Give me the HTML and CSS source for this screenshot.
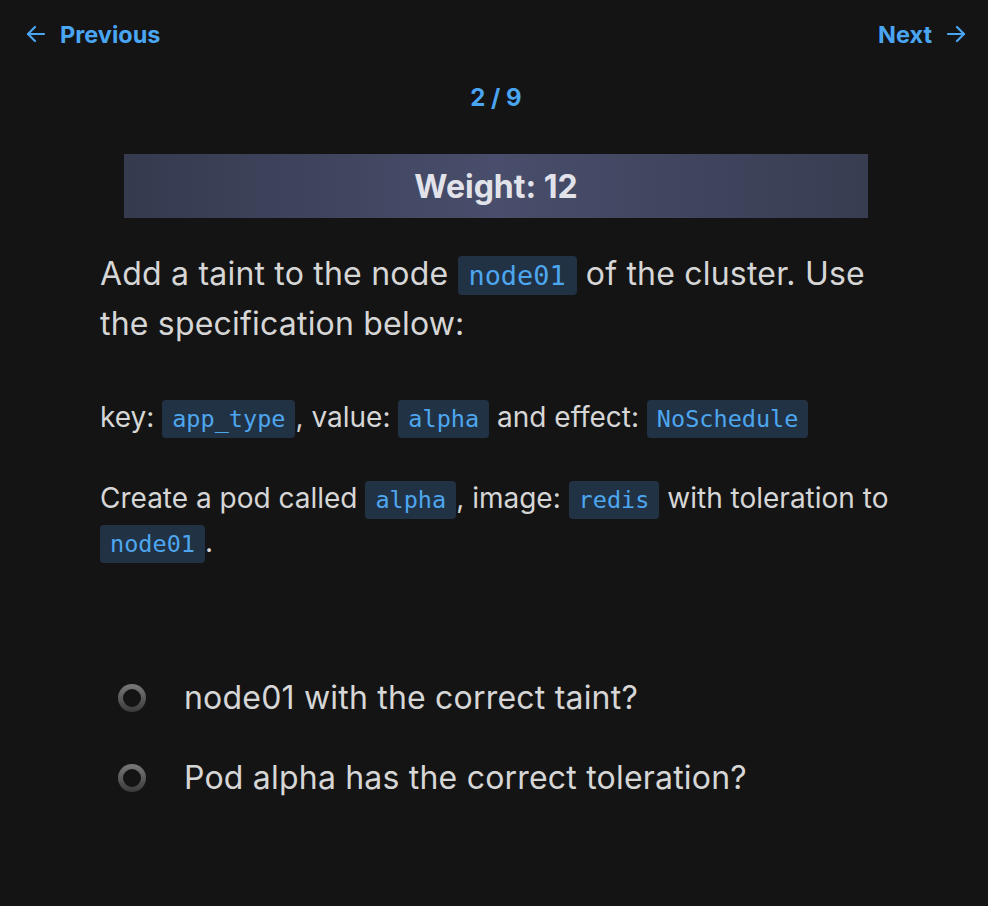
FILE: index.html
```html
<!DOCTYPE html>
<html lang="en">
<head>
<meta charset="utf-8">
<title>Question 2</title>
<link rel="stylesheet" href="styles.css">
</head>
<body>
<div class="page">
  <nav class="nav">
    <a class="nav-link" href="#">
      <svg class="arrow" viewBox="0 0 24 24" width="24" height="24" fill="none" stroke="currentColor" stroke-width="2.2" stroke-linecap="round" stroke-linejoin="round"><path d="M20 12H4"/><path d="M11 5l-7 7 7 7"/></svg>
      <span>Previous</span>
    </a>
    <a class="nav-link" href="#">
      <span>Next</span>
      <svg class="arrow" viewBox="0 0 24 24" width="24" height="24" fill="none" stroke="currentColor" stroke-width="2.2" stroke-linecap="round" stroke-linejoin="round"><path d="M4 12h16"/><path d="M13 5l7 7-7 7"/></svg>
    </a>
  </nav>
  <div class="counter">2 / 9</div>
  <main class="content">
    <div class="weight">Weight: 12</div>
    <p class="lead">Add a taint to the node <code>node01</code> of the cluster. Use the specification below:</p>
    <p class="body">key: <code>app_type</code>, value: <code>alpha</code> and effect: <code>NoSchedule</code></p>
    <p class="body">Create a pod called <code>alpha</code>, image: <code>redis</code> with toleration to <code>node01</code>.</p>
    <ul class="checks">
      <li class="check"><span class="ring"></span><span>node01 with the correct taint?</span></li>
      <li class="check"><span class="ring"></span><span>Pod alpha has the correct toleration?</span></li>
    </ul>
  </main>
</div>
</body>
</html>
```

FILE: styles.css
```css
html, body {
  margin: 0;
  padding: 0;
  background: #141414;
}
body {
  font-family: Inter, "Noto Sans", sans-serif;
  color: #d6d6d6;
}
.page {
  width: 988px;
  min-height: 906px;
}
.nav {
  display: flex;
  justify-content: space-between;
  align-items: center;
  padding: 21px 20px 0 24px;
  height: 26px;
}
.nav-link {
  display: flex;
  align-items: center;
  gap: 12px;
  color: #4aa5f2;
  text-decoration: none;
  font-weight: 700;
  font-size: 23.5px;
}
.arrow {
  display: block;
}
.counter {
  margin-top: 38px;
  text-align: center;
  padding-left: 4px;
  color: #4aa5f2;
  font-weight: 700;
  font-size: 24px;
  line-height: 26px;
}
.content {
  margin: 0 0 0 100px;
  width: 792px;
}
.weight {
  margin: 43px 24px 0;
  height: 64px;
  display: flex;
  align-items: center;
  justify-content: center;
  background: linear-gradient(90deg, #363a4f 0%, #484e6b 50%, #383d52 100%);
  color: #e2e3ea;
  font-weight: 700;
  font-size: 32px;
}
.lead {
  margin: 31px 0 0;
  font-size: 32px;
  line-height: 50px;
  letter-spacing: 0.2px;
}
.body {
  margin: 0;
  font-size: 28px;
  line-height: 44px;
}
.lead + .body {
  margin-top: 46px;
}
.body + .body {
  margin-top: 37px;
}
code {
  font-family: "DejaVu Sans Mono", "Liberation Mono", monospace;
  font-size: 0.84em;
  line-height: 1;
  letter-spacing: 0;
  color: #4ea6ef;
  background: #203244;
  border-radius: 4px;
  padding: 5px 10px;
}
.lead code {
  padding: 4px 11px;
}
.checks {
  list-style: none;
  margin: 117px 0 0;
  padding: 0 0 0 18px;
  display: flex;
  flex-direction: column;
  gap: 46px;
}
.check {
  display: flex;
  align-items: center;
  gap: 38px;
  font-size: 32px;
  line-height: 34px;
  letter-spacing: 0.2px;
}
.ring {
  flex: none;
  width: 28px;
  height: 28px;
  box-sizing: border-box;
  border-radius: 50%;
  background: linear-gradient(180deg, #7a7a7a, #3a3a3a);
  padding: 5px;
}
.ring::after {
  content: "";
  display: block;
  width: 18px;
  height: 18px;
  border-radius: 50%;
  background: #141414;
}
```
